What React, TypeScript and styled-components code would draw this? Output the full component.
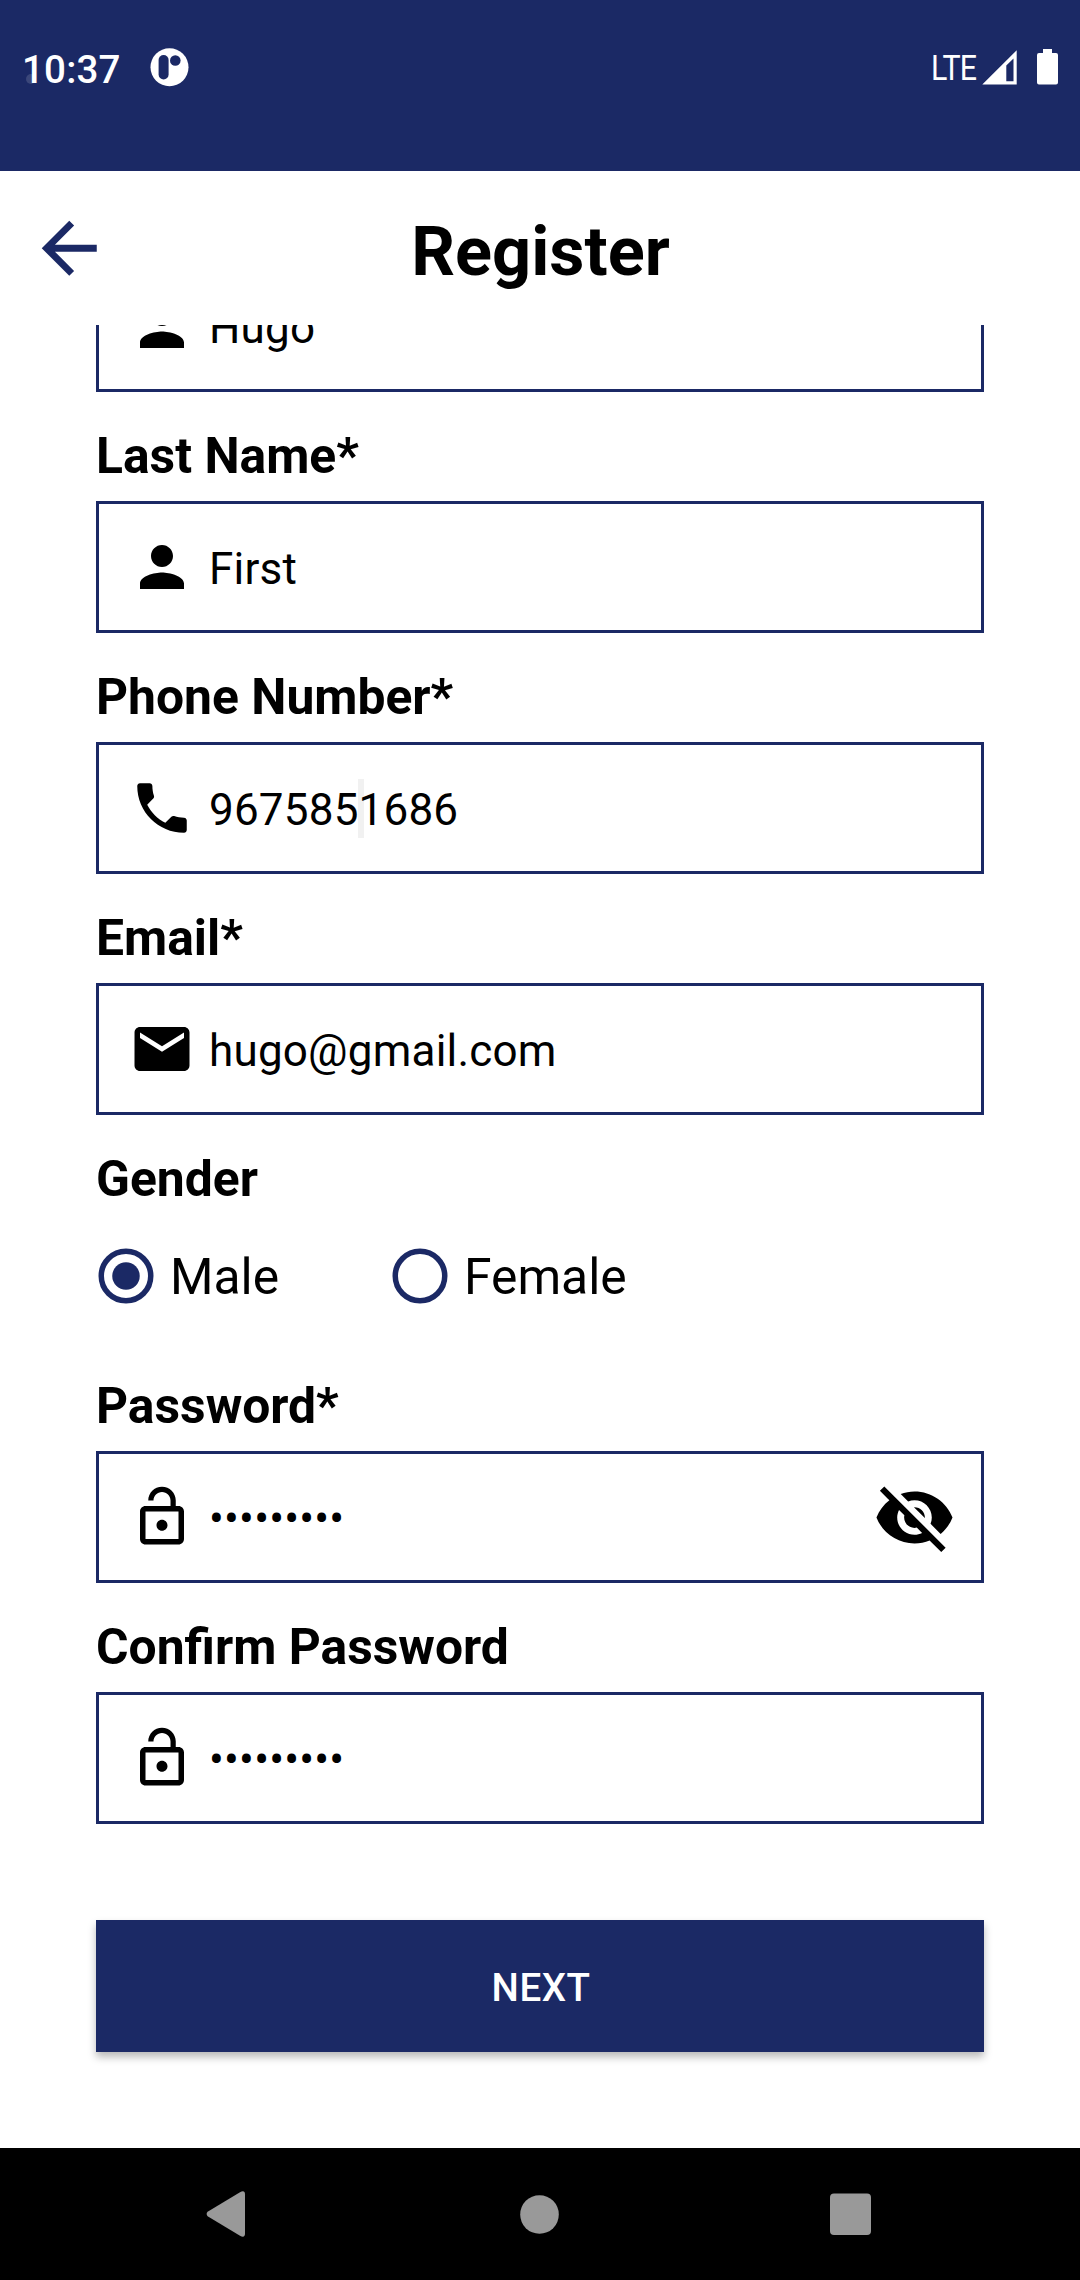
import React from "react";
import styled, { createGlobalStyle } from "styled-components";

const navy = "#1b2965";

const GlobalStyle = createGlobalStyle`
  * { box-sizing: border-box; }
  html, body { margin: 0; padding: 0; background: #fff; }
  body { font-family: Roboto, "Liberation Sans", sans-serif; color: #000; }
`;

const Screen = styled.div`
  width: 1080px;
  height: 2280px;
  display: flex;
  flex-direction: column;
  background: #fff;
  overflow: hidden;
`;

const StatusBar = styled.header`
  flex: none;
  height: 171px;
  padding: 46px 22px 0 22px;
  display: flex;
  align-items: flex-start;
  background: ${navy};
  color: #fff;
`;

const Clock = styled.span`
  position: relative;
  width: 128px;
  padding-top: 1px;
  font-size: 38.5px;
  font-weight: 500;
  line-height: 46px;
  letter-spacing: 0.2px;

  &::before {
    content: "";
    position: absolute;
    left: 4px;
    top: 28px;
    width: 10px;
    height: 10px;
    border-radius: 50%;
    background: rgba(255, 255, 255, 0.14);
  }
`;

const StatusIcons = styled.div`
  margin-left: auto;
  height: 42px;
  display: flex;
  align-items: center;
`;

const Network = styled.span`
  width: 51px;
  padding-top: 1px;
  font-size: 34.5px;
  line-height: 42px;
  letter-spacing: -1px;
  transform: scaleX(0.88);
  transform-origin: left center;
`;

const AppBar = styled.div`
  flex: none;
  height: 154px;
  padding: 0 28px;
  display: grid;
  grid-template-columns: 83px 1fr 83px;
  align-items: center;
`;

const BackButton = styled.button`
  padding: 0;
  border: 0;
  background: none;
  color: ${navy};
  display: flex;
`;

const Title = styled.h1`
  margin: 0;
  padding: 8px 0 0 1px;
  text-align: center;
  font-size: 68.5px;
  font-weight: 700;
  line-height: 80px;
`;

const ScrollArea = styled.main`
  flex: 1;
  min-height: 0;
  overflow: hidden;
  display: flex;
  flex-direction: column;
  justify-content: flex-end;
  padding: 0 96px 96px;
`;

const Field = styled.div`
  flex: none;
  display: flex;
  flex-direction: column;
`;

const Label = styled.label`
  margin: 35px 0 16px;
  font-size: 49.8px;
  font-weight: 700;
  line-height: 58px;
`;

const InputBox = styled.div`
  height: 132px;
  padding: 0 25px 0 30px;
  border: 3px solid ${navy};
  display: flex;
  align-items: center;
  gap: 14px;
`;

const Value = styled.span`
  position: relative;
  isolation: isolate;
  flex: 1;
  padding-top: 4px;
  font-size: 44px;
  line-height: 52px;
  letter-spacing: 0.2px;
`;

const Caret = styled.i`
  position: absolute;
  z-index: -1;
  left: 149px;
  top: -1px;
  width: 6px;
  height: 59px;
  background: #f1f1f1;
`;

const Options = styled.div`
  margin: 18px 0 32px -3px;
  display: grid;
  grid-template-columns: 294px 1fr;
`;

const Option = styled.div`
  display: flex;
  align-items: center;
  gap: 11px;
  font-size: 49.8px;
  line-height: 66px;
`;

const OptionText = styled.span`
  padding-top: 2px;
`;

const NextButton = styled.button`
  flex: none;
  height: 132px;
  margin-top: 96px;
  padding: 2px 0 0 2px;
  border: 0;
  background: ${navy};
  color: #fff;
  font-family: inherit;
  font-size: 38.5px;
  font-weight: 500;
  letter-spacing: 0.5px;
  box-shadow: 0 5px 8px rgba(0, 0, 0, 0.28);
`;

const NavBar = styled.footer`
  flex: none;
  height: 132px;
  display: grid;
  grid-template-columns: 1fr 40px 1fr;
  align-items: center;
  padding: 0 209px 0 206px;
  background: #000;

  & > :last-child {
    justify-self: end;
  }
`;

const Glyph = styled.svg<{ $size: number }>`
  flex: none;
  display: block;
  width: ${(p) => p.$size}px;
  height: ${(p) => p.$size}px;
  fill: currentColor;
`;

const Drawing = styled.svg`
  flex: none;
  display: block;
`;

const icons = {
  back: "M20 11H7.83l5.59-5.59L12 4l-8 8 8 8 1.41-1.41L7.83 13H20v-2z",
  person:
    "M12 12c2.21 0 4-1.79 4-4s-1.79-4-4-4-4 1.79-4 4 1.79 4 4 4zm0 2c-2.67 0-8 1.34-8 4v2h16v-2c0-2.66-5.33-4-8-4z",
  phone:
    "M6.62 10.79c1.44 2.83 3.76 5.14 6.59 6.59l2.2-2.2c.27-.27.67-.36 1.02-.24 1.12.37 2.33.57 3.57.57.55 0 1 .45 1 1V20c0 .55-.45 1-1 1-9.39 0-17-7.61-17-17 0-.55.45-1 1-1h3.5c.55 0 1 .45 1 1 0 1.25.2 2.45.57 3.57.11.35.03.74-.25 1.02l-2.2 2.2z",
  email:
    "M20 4H4c-1.1 0-1.99.9-1.99 2L2 18c0 1.1.9 2 2 2h16c1.1 0 2-.9 2-2V6c0-1.1-.9-2-2-2zm0 4l-8 5-8-5V6l8 5 8-5v2z",
  lock:
    "M12 17c1.1 0 2-.9 2-2s-.9-2-2-2-2 .9-2 2 .9 2 2 2zm6-9h-1V6c0-2.76-2.24-5-5-5S7 3.24 7 6h1.9c0-1.71 1.39-3.1 3.1-3.1 1.71 0 3.1 1.39 3.1 3.1v2H6c-1.1 0-2 .9-2 2v10c0 1.1.9 2 2 2h12c1.1 0 2-.9 2-2V10c0-1.1-.9-2-2-2zm0 12H6V10h12v10z",
  hidden:
    "M12 7c2.76 0 5 2.24 5 5 0 .65-.13 1.26-.36 1.83l2.92 2.92c1.51-1.26 2.7-2.89 3.43-4.75-1.73-4.39-6-7.5-11-7.5-1.4 0-2.74.25-3.98.7l2.16 2.16C10.74 7.13 11.35 7 12 7zM2 4.27l2.28 2.28.46.46C3.08 8.3 1.78 10.02 1 12c1.73 4.39 6 7.5 11 7.5 1.55 0 3.03-.3 4.38-.84l.42.42L19.73 22 21 20.73 3.27 3 2 4.27zM7.53 9.8l1.55 1.55c-.05.21-.08.43-.08.65 0 1.66 1.34 3 3 3 .22 0 .44-.03.65-.08l1.55 1.55c-.67.33-1.41.53-2.2.53-2.76 0-5-2.24-5-5 0-.79.2-1.53.53-2.2zm4.31-.78l3.15 3.15.02-.16c0-1.66-1.34-3-3-3l-.17.01z",
};

type IconName = keyof typeof icons;

const Icon = ({ name, size = 66 }: { name: IconName; size?: number }) => (
  <Glyph $size={size} viewBox="0 0 24 24">
    <path d={icons[name]} />
  </Glyph>
);

const Radio = ({ checked }: { checked?: boolean }) => (
  <Drawing width="66" height="66" viewBox="0 0 24 24">
    <circle cx="12" cy="12" r="9" fill="none" stroke={navy} strokeWidth="2" />
    {checked && <circle cx="12" cy="12" r="5" fill={navy} />}
  </Drawing>
);

interface TextFieldProps {
  label?: string;
  icon: IconName;
  value: string;
  caret?: boolean;
  concealable?: boolean;
}

const TextField = ({ label, icon, value, caret, concealable }: TextFieldProps) => (
  <Field>
    {label && <Label>{label}</Label>}
    <InputBox>
      <Icon name={icon} />
      <Value>
        {caret && <Caret />}
        {value}
      </Value>
      {concealable && <Icon name="hidden" size={83} />}
    </InputBox>
  </Field>
);

const password = "•".repeat(9);

export default function App() {
  return (
    <>
      <GlobalStyle />
      <Screen>
        <StatusBar>
          <Clock>10:37</Clock>
          <Drawing width="40" height="42" viewBox="0 0 40 42">
            <circle cx="19.5" cy="21.3" r="19" fill="#fff" />
            <rect x="8.6" y="9" width="10" height="24.5" rx="5" fill={navy} />
            <circle cx="25.3" cy="14.5" r="5.3" fill={navy} />
          </Drawing>
          <StatusIcons>
            <Network>LTE</Network>
            <Drawing width="76" height="42" viewBox="982 46 76 42">
              <path
                fill="#fff"
                fillRule="evenodd"
                d="M982.3 84.6 1016.7 50.3V84.6ZM1006.3 65.6V81.3H1013.5V58.6Z"
              />
              <path
                fill="#fff"
                d="M1043 49h9v4h4a2 2 0 0 1 2 2v27.5a2 2 0 0 1-2 2h-17a2 2 0 0 1-2-2V55a2 2 0 0 1 2-2h4z"
              />
            </Drawing>
          </StatusIcons>
        </StatusBar>

        <AppBar>
          <BackButton aria-label="Back">
            <Icon name="back" size={82.5} />
          </BackButton>
          <Title>Register</Title>
        </AppBar>

        <ScrollArea>
          <TextField icon="person" value="Hugo" />
          <TextField label="Last Name*" icon="person" value="First" />
          <TextField label="Phone Number*" icon="phone" value="9675851686" caret />
          <TextField label="Email*" icon="email" value="hugo@gmail.com" />
          <Field>
            <Label>Gender</Label>
            <Options>
              <Option>
                <Radio checked />
                <OptionText>Male</OptionText>
              </Option>
              <Option>
                <Radio />
                <OptionText>Female</OptionText>
              </Option>
            </Options>
          </Field>
          <TextField label="Password*" icon="lock" value={password} concealable />
          <TextField label="Confirm Password" icon="lock" value={password} />
          <NextButton>NEXT</NextButton>
        </ScrollArea>

        <NavBar>
          <Drawing width="40" height="46" viewBox="0 0 40 46">
            <path
              fill="#999"
              d="M1.6 20.8 34 1.2Q39 -1.3 39 3.5V42.5Q39 47.3 34 44.8L1.6 25.2Q-0.4 23 1.6 20.8Z"
            />
          </Drawing>
          <Drawing width="40" height="40" viewBox="0 0 40 40">
            <circle cx="20.5" cy="20.5" r="19.3" fill="#999" />
          </Drawing>
          <Drawing width="41" height="42" viewBox="0 0 41 42">
            <rect y="0.5" width="41" height="41.5" rx="4" fill="#999" />
          </Drawing>
        </NavBar>
      </Screen>
    </>
  );
}
